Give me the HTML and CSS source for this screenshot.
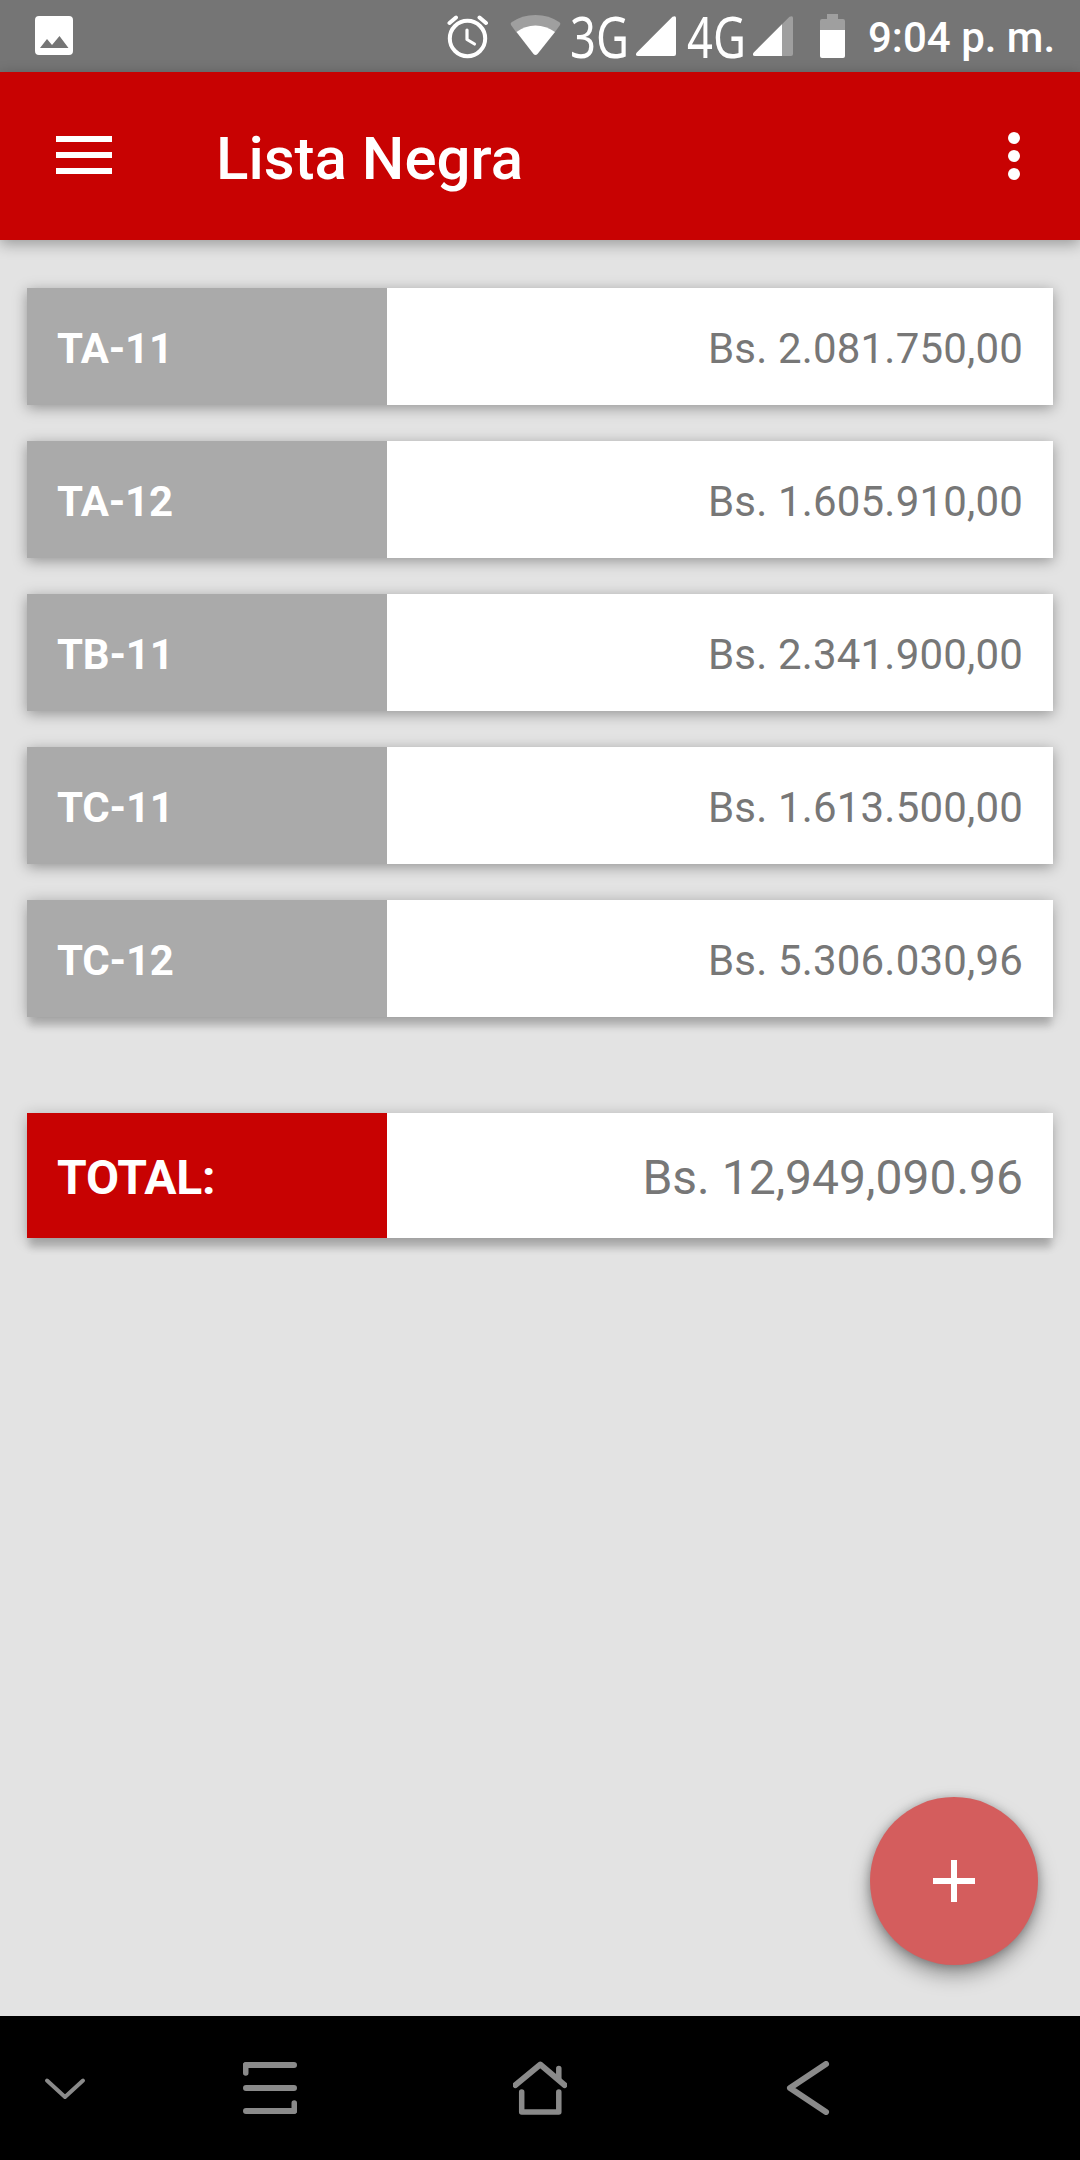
FILE: index.html
```html
<!DOCTYPE html>
<html lang="es">
<head>
    <meta charset="UTF-8">
    <meta name="viewport" content="width=device-width, initial-scale=1.0">
    <title>Lista Negra</title>
    <link rel="stylesheet" href="styles.css">
</head>
<body>
    <div class="status-bar">
        <svg class="status-photo" width="38" height="39" viewBox="0 0 38 39">
            <path fill="#fff" fill-rule="evenodd" d="M4 0h30q4 0 4 4v31q0 4-4 4H4q-4 0-4-4V4q0-4 4-4zM5 32h28.500L24.500 20l-7.500 9-5-6z"/>
        </svg>
        <div class="status-icons">
            <svg class="alarm" width="42" height="44" viewBox="0 0 42 44" fill="none" stroke="#fff" stroke-linecap="round" stroke-linejoin="round">
                <circle cx="20.5" cy="23.5" r="17.7" stroke-width="4"/>
                <path stroke-width="3.2" d="M20 15v9.500l7.500 4.500"/>
                <path stroke-width="4" d="M2.500 8L9 2.500M39 8l-6.500-5.500"/>
            </svg>
            <svg class="wifi" width="52" height="42" viewBox="0 0 52 42">
                <path fill="#9f9f9f" d="M1 11q-1-1.500.5-2.700Q12 1 25.500 1t24 7.300q1.500 1.200.5 2.700L45 18 25.500 30 6 18z"/>
                <path fill="#fff" d="M6.500 18Q15 11.500 25.500 11.500T45 18L27.500 40q-2 2-4 0z"/>
            </svg>
            <span class="net-label net-3g">3G</span>
            <svg class="signal" width="40" height="40" viewBox="0 0 40 40">
                <path fill="#fff" d="M36.500.8Q40-1 40 2v36q0 2-2 2H2q-3.500-.5-1.200-3.500z"/>
            </svg>
            <span class="net-label net-4g">4G</span>
            <svg class="signal" width="40" height="40" viewBox="0 0 40 40">
                <path fill="#9f9f9f" d="M36.500.8Q40-1 40 2v36q0 2-2 2H2q-3.500-.5-1.200-3.500z"/>
                <path fill="#fff" d="M29 8.200V40H2q-3.500-.5-1.200-3.500z"/>
            </svg>
            <svg class="battery" width="25" height="44" viewBox="0 0 25 44">
                <path fill="#9f9f9f" d="M7 0h11v5h5q2 0 2 2v9H0V7q0-2 2-2h5z"/>
                <path fill="#fff" d="M0 16h25v26q0 2-2 2H2q-2 0-2-2z"/>
            </svg>
            <span class="clock">9:04 p. m.</span>
        </div>
    </div>

    <header class="toolbar">
        <svg class="menu-icon" width="56" height="38" viewBox="0 0 56 38" fill="#fff">
            <path d="M0 0h56v6H0zM0 16h56v6H0zM0 32h56v6H0z"/>
        </svg>
        <h1 class="title">Lista Negra</h1>
        <svg width="72" height="72" viewBox="0 0 24 24" fill="#fff">
            <circle cx="12" cy="6" r="2"/>
            <circle cx="12" cy="12" r="2"/>
            <circle cx="12" cy="18" r="2"/>
        </svg>
    </header>

    <main class="content">
        <div class="list">
            <div class="row">
                <div class="name">TA-11</div>
                <div class="amount">Bs. 2.081.750,00</div>
            </div>
            <div class="row">
                <div class="name">TA-12</div>
                <div class="amount">Bs. 1.605.910,00</div>
            </div>
            <div class="row">
                <div class="name">TB-11</div>
                <div class="amount">Bs. 2.341.900,00</div>
            </div>
            <div class="row">
                <div class="name">TC-11</div>
                <div class="amount">Bs. 1.613.500,00</div>
            </div>
            <div class="row last">
                <div class="name">TC-12</div>
                <div class="amount">Bs. 5.306.030,96</div>
            </div>
        </div>
        <div class="row total">
            <div class="name">TOTAL:</div>
            <div class="amount">Bs. 12,949,090.96</div>
        </div>
        <button class="fab" aria-label="Agregar">
            <svg width="72" height="72" viewBox="0 0 24 24" fill="#fff">
                <path d="M19 13h-6v6h-2v-6H5v-2h6V5h2v6h6v2z"/>
            </svg>
        </button>
    </main>

    <nav class="nav-bar">
        <svg class="nav-hide" width="44" height="24" viewBox="0 0 44 24">
            <path stroke-width="4" d="M4 4.500l18 16.500L40 4.500"/>
        </svg>
        <svg class="nav-recent" width="54" height="52" viewBox="0 0 54 52">
            <path stroke-width="6" d="M51 3H3M3 26h48M3 49h48"/>
            <path stroke-width="5.500" d="M2.750 3v8M51.250 49v-8"/>
        </svg>
        <svg class="nav-home" width="54" height="54" viewBox="0 0 54 54">
            <path stroke-width="6" d="M2.500 24L27.300 3.500 51.500 24"/>
            <path stroke-width="5.500" d="M45.800 7.500V18M8.700 31v20h37.100V31"/>
        </svg>
        <svg class="nav-back" width="44" height="54" viewBox="0 0 44 54">
            <path stroke-width="6" d="M40 3L4 27l36 24"/>
        </svg>
    </nav>
</body>
</html>
```
FILE: styles.css
```css
* {
    box-sizing: border-box;
}
body {
    margin: 0;
    width: 1080px;
    height: 2160px;
    display: flex;
    flex-direction: column;
    overflow: hidden;
    background-color: #e3e3e3;
    font-family: Roboto, sans-serif;
}
svg {
    display: block;
    flex-shrink: 0;
}

/* status bar */
.status-bar {
    height: 72px;
    flex-shrink: 0;
    display: flex;
    justify-content: space-between;
    background-color: #757575;
    color: white;
}
.status-photo {
    margin: 16px 0 0 35px;
}
.status-icons {
    display: flex;
    margin-right: 24px;
}
.alarm {
    margin-top: 15px;
}
.wifi {
    margin: 14px 0 0 21px;
}
.net-label {
    font-family: "Noto Sans", sans-serif;
    font-size: 56px;
    line-height: 72px;
    white-space: nowrap;
    transform-origin: left center;
    transform: scaleX(0.81);
}
.net-3g {
    width: 66px;
    margin-left: 8px;
}
.net-4g {
    width: 66px;
    margin-left: 11px;
}
.signal {
    margin-top: 16px;
}
.battery {
    margin: 14px 0 0 27px;
}
.clock {
    margin-left: 23px;
    width: 188px;
    font-size: 42px;
    font-weight: 500;
    line-height: 75px;
    white-space: nowrap;
}

/* toolbar */
.toolbar {
    position: relative;
    height: 168px;
    flex-shrink: 0;
    display: flex;
    align-items: center;
    padding: 0 30px 0 56px;
    background-color: #c80202;
    color: white;
    box-shadow: 0 4px 14px rgba(0,0,0,0.33);
}
.menu-icon {
    margin-top: -2px;
}
.title {
    flex: 1;
    margin: 0 0 0 104px;
    padding-top: 5px;
    font-size: 60px;
    font-weight: 500;
    line-height: 72px;
}

/* list */
.content {
    position: relative;
    flex: 1;
    padding: 48px 27px 0;
}
.list {
    display: flex;
    flex-direction: column;
    gap: 36px;
}
.row {
    display: flex;
    height: 117px;
    background-color: white;
    font-size: 42px;
    line-height: 122px;
    box-shadow: 0 3px 13px rgba(0,0,0,0.35);
}
.name {
    width: 360px;
    padding-left: 30px;
    background-color: #aaaaaa;
    color: white;
    font-weight: bold;
    letter-spacing: -0.2px;
}
.amount {
    flex: 1;
    padding-right: 30px;
    text-align: right;
    color: #777777;
    letter-spacing: 0.18px;
}
.row.last {
    box-shadow: 0 11px 7px -2px rgba(0,0,0,0.15), 0 1px 14px rgba(0,0,0,0.26);
}
.total {
    height: 125px;
    margin-top: 96px;
    font-size: 48px;
    line-height: 129px;
    box-shadow: 0 12px 7px -2px rgba(0,0,0,0.16), 0 2px 14px rgba(0,0,0,0.24);
}
.total .name {
    background-color: #c80202;
}
.total .amount {
    letter-spacing: 0;
}

/* floating button */
.fab {
    position: absolute;
    right: 42px;
    bottom: 51px;
    width: 168px;
    height: 168px;
    padding: 0;
    border: none;
    border-radius: 50%;
    display: flex;
    align-items: center;
    justify-content: center;
    background-color: #d45d5d;
    box-shadow: 0 10px 20px rgba(0,0,0,0.35), 0 1px 10px rgba(0,0,0,0.25);
}

/* system navigation */
.nav-bar {
    height: 144px;
    flex-shrink: 0;
    display: flex;
    align-items: center;
    background-color: black;
}
.nav-bar path {
    fill: none;
    stroke: #8a8a8a;
    stroke-linecap: round;
    stroke-linejoin: round;
}
.nav-hide {
    margin-left: 43px;
}
.nav-recent {
    margin-left: 156px;
}
.nav-home {
    margin-left: 216px;
}
.nav-back {
    margin-left: 219px;
}
```
